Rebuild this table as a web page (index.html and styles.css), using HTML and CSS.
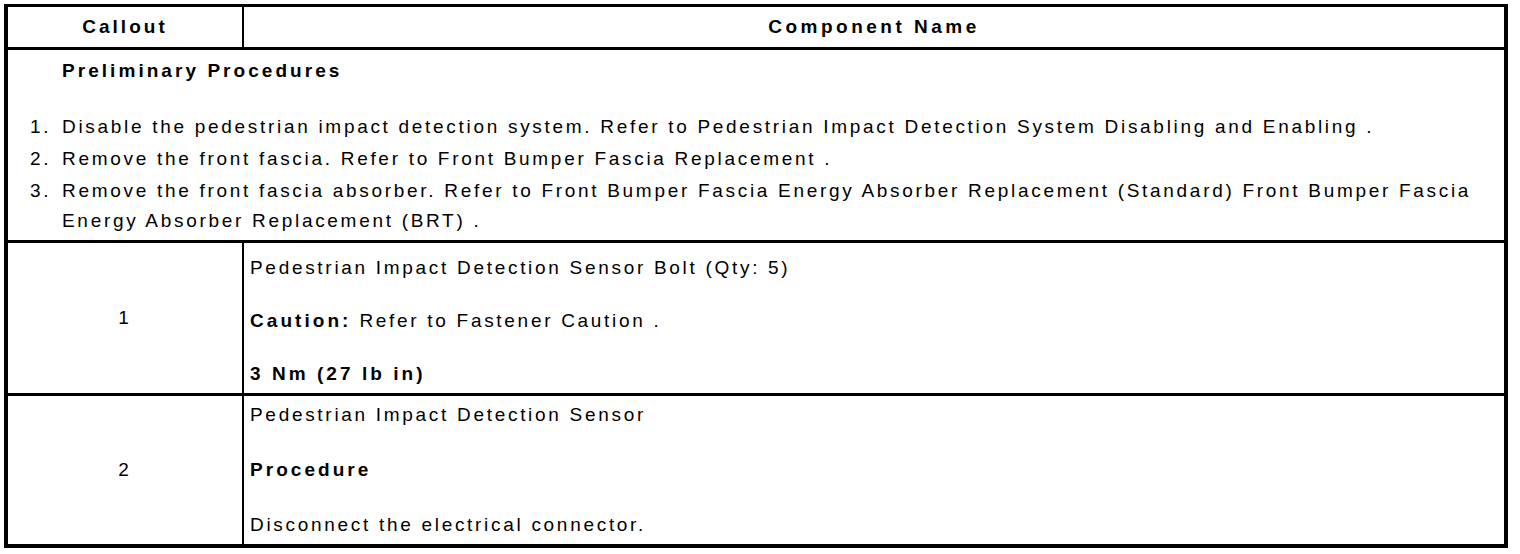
FILE: index.html
```html
<!DOCTYPE html>
<html lang="en">
<head>
<meta charset="utf-8">
<title>Pedestrian Impact Detection Sensor Replacement</title>
<link rel="stylesheet" href="styles.css">
</head>
<body>
<table class="proc">
  <colgroup>
    <col class="col-callout">
    <col class="col-name">
  </colgroup>
  <thead>
    <tr>
      <th class="callout-head">Callout</th>
      <th class="name-head">Component Name</th>
    </tr>
  </thead>
  <tbody>
    <tr class="prelim-row">
      <td class="prelim" colspan="2">
        <p class="prelim-title">Preliminary Procedures</p>
        <ol class="steps">
          <li><span class="num">1.</span><span class="step-text">Disable the pedestrian impact detection system. Refer to Pedestrian Impact Detection System Disabling and Enabling .</span></li>
          <li><span class="num">2.</span><span class="step-text">Remove the front fascia. Refer to Front Bumper Fascia Replacement .</span></li>
          <li><span class="num">3.</span><span class="step-text">Remove the front fascia absorber. Refer to Front Bumper Fascia Energy Absorber Replacement (Standard) Front Bumper Fascia Energy Absorber Replacement (BRT) .</span></li>
        </ol>
      </td>
    </tr>
    <tr class="item-row row-one">
      <td class="callout">1</td>
      <td class="desc">
        <p>Pedestrian Impact Detection Sensor Bolt (Qty: 5)</p>
        <p><strong>Caution:</strong> Refer to Fastener Caution .</p>
        <p><strong>3 Nm (27 lb in)</strong></p>
      </td>
    </tr>
    <tr class="item-row row-two">
      <td class="callout">2</td>
      <td class="desc">
        <p>Pedestrian Impact Detection Sensor</p>
        <p><strong>Procedure</strong></p>
        <p>Disconnect the electrical connector.</p>
      </td>
    </tr>
  </tbody>
</table>
</body>
</html>
```

FILE: styles.css
```css
html, body {
  background: #ffffff;
}

body {
  margin: 4px;
  font-family: "Liberation Sans", Arial, Helvetica, sans-serif;
  font-size: 19px;
  color: #000000;
  letter-spacing: 2.7px;
}

strong,
th,
.prelim-title {
  font-weight: bold;
  letter-spacing: 3.05px;
}

.name-head {
  letter-spacing: 3.5px;
}

.proc {
  width: 1504px;
  table-layout: fixed;
  border-collapse: separate;
  border-spacing: 0;
  border-style: solid;
  border-color: #000000;
  border-width: 3px 4px 4px 4px;
}

.col-callout {
  width: 236px;
}

th,
td {
  box-sizing: border-box;
  padding: 0;
}

th {
  height: 43px;
  line-height: 24px;
  text-align: center;
  vertical-align: middle;
  border-bottom: 3px solid #000000;
}

.callout-head {
  border-right: 2px solid #000000;
}

/* Preliminary procedures */
.prelim {
  height: 193px;
  vertical-align: top;
  padding: 9px 0 4px 22px;
  border-bottom: 3px solid #000000;
}

.prelim-title {
  margin: 0 0 29px 32px;
  line-height: 24px;
}

.steps {
  list-style: none;
  margin: 0;
  padding: 0;
}

.steps li {
  display: flex;
  line-height: 30px;
  margin-bottom: 2px;
}

.steps li:last-child {
  margin-bottom: 0;
}

.num {
  flex: 0 0 32px;
}

.step-text {
  flex: 1 1 auto;
}

/* Component rows */
.callout {
  text-align: center;
  vertical-align: middle;
  border-right: 2px solid #000000;
}

.desc {
  vertical-align: top;
  padding-left: 6px;
}

.desc p {
  margin: 0;
  line-height: 24px;
}

.row-one td {
  height: 153px;
  border-bottom: 3px solid #000000;
}

.row-one .desc {
  padding-top: 13px;
}

.row-one .desc p + p {
  margin-top: 29px;
}

.row-two td {
  height: 148px;
}

.row-two .desc {
  padding-top: 7px;
}

.row-two .desc p + p {
  margin-top: 31px;
}
```
